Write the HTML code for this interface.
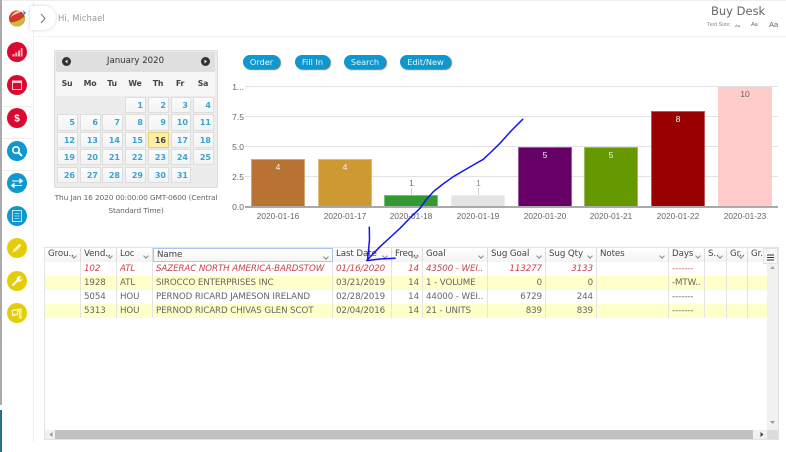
<!DOCTYPE html>
<html><head><meta charset="utf-8">
<style>
html,body{margin:0;padding:0;width:786px;height:452px;overflow:hidden;background:#fff}
#w{position:absolute;left:0;top:0;width:786px;height:452px;filter:blur(.35px);font-family:"DejaVu Sans","Liberation Sans",sans-serif;color:#555}
.a{position:absolute}
.ic{position:absolute;left:7px;width:20px;height:20px;border-radius:50%}
.ic svg{position:absolute;left:0;top:0}
.r{background:#d9092f}.b{background:#0d98cf}.y{background:#e4cd05}
.cal{left:54px;top:50px;width:164px;height:138px;background:#ececec;border:1px solid #ddd;border-radius:2px;box-sizing:border-box}
.d{position:absolute;width:20px;height:15px;background:linear-gradient(#fbfbfb,#f3f3f3);border:1px solid #dedede;box-sizing:border-box;color:#3ba3d4;font:bold 8px/15px "DejaVu Sans",sans-serif;text-align:right;padding-right:2px}
.wd{position:absolute;top:79px;font:bold 7.800px "DejaVu Sans",sans-serif;color:#444;width:22px;text-align:center;letter-spacing:-.2px}
.btn{position:absolute;top:55px;height:14px;background:#0d98cf;border-radius:8px;box-shadow:1px 1px 1px #777;color:#e8f6fb;font:8.200px/15px "DejaVu Sans",sans-serif;text-align:center}
.gl{position:absolute;left:245px;width:533px;height:1px;background:#e2e2e2}
.yl{position:absolute;width:14px;left:230px;text-align:right;font:8.500px "Liberation Sans",sans-serif;color:#666}
.bar{position:absolute;width:54px;box-sizing:border-box;border:1px solid rgba(255,255,255,.35);border-bottom:0;text-align:center;font:8.500px/14px "Liberation Sans",sans-serif;color:#f2f2f2}
.xl{position:absolute;top:211px;width:66px;text-align:center;font:8.300px "Liberation Sans",sans-serif;color:#666}
.hc,.c{position:absolute;box-sizing:border-box;white-space:nowrap;overflow:hidden;font-size:8.700px;letter-spacing:-.1px}
.hc{top:248px;height:14px;line-height:13px;padding-left:3px;border-right:1px solid #ddd;color:#444;background:linear-gradient(#fff,#f4f4f4)}
.hc i{position:absolute;right:4px;top:6px;width:3px;height:3px;border-right:1px solid #888;border-bottom:1px solid #888;transform:rotate(45deg)}
.row{position:absolute;left:45px;width:722px;height:14px}
.c{top:0;height:14px;line-height:14px;padding:0 3px;border-right:1px solid #e4e4e4;color:#666}
.rt{text-align:right}
.red .c{color:#c8414f;font-style:italic}
</style></head><body><div id="w">
<div class="a" style="left:0;top:0;width:786px;height:1px;background:#eee"></div>
<div class="a" style="left:0;top:0;width:1.500px;height:405px;background:#aaa"></div>
<div class="a" style="left:0;top:410px;width:1.500px;height:42px;background:#2a6f8e"></div>
<div class="a" style="left:33px;top:0;width:1px;height:442px;background:#eee"></div>
<div class="a" style="left:34px;top:36px;width:752px;height:1px;background:#f3f3f3"></div>
<div class="a" style="left:2px;top:106px;width:31px;height:1px;background:#eee"></div>
<div class="a" style="left:2px;top:138px;width:31px;height:1px;background:#eee"></div>
<div class="a" style="left:2px;top:170px;width:31px;height:1px;background:#eee"></div>

<svg class="a" style="left:8px;top:9px" width="19" height="18" viewBox="0 0 19 18">
<circle cx="9" cy="9.500" r="8" fill="#cf3a28"/><path d="M2 13C7 14 12 11 17 7C17.500 12 14 17.500 9 17.500C6 17.500 3 15.500 2 13Z" fill="#c6bb3c"/><path d="M3 8C6 5 10 5 14 2C10 1 5 3 3 8Z" fill="#f0c9b8"/><path d="M15 1L18 4L16 6Z" fill="#3a82b5"/></svg>

<div class="a" style="left:30px;top:6px;width:26px;height:24px;background:#fff;border-radius:0 12px 12px 0;box-shadow:0 0 3px #ccc"></div>
<svg class="a" style="left:39px;top:13px" width="8" height="11"><path d="M2 1L6 5.500L2 10" fill="none" stroke="#777" stroke-width="1"/></svg>
<div class="a" style="left:58px;top:14px;font-size:8.500px;color:#999">Hi, Michael</div>
<div class="a" style="left:711px;top:4px;font-size:11.500px;color:#666;white-space:nowrap">Buy Desk</div>
<div class="a" style="left:707px;top:22px;font:5.500px 'Liberation Sans',sans-serif;color:#888">Text Size:</div>
<div class="a" style="left:735px;top:23px;font:4px 'Liberation Sans',sans-serif;color:#666">Aa</div>
<div class="a" style="left:751px;top:22px;font:5.500px 'Liberation Sans',sans-serif;color:#666">Aa</div>
<div class="a" style="left:769px;top:20px;font:7.500px 'Liberation Sans',sans-serif;color:#666">Aa</div>

<div class="ic r" style="top:42px"><svg width="20" height="20"><path d="M5.500 12h2v2.500h-2zM8.300 10.500h2v4h-2zM11 8.500h2v6h-2zM13.700 6h1.800v8.500h-1.800z" fill="#f5b5c1"/></svg></div>
<div class="ic r" style="top:75px"><svg width="20" height="20"><rect x="5.500" y="6" width="9" height="8.500" fill="none" stroke="#f9cdd5" stroke-width="1"/><rect x="5.500" y="6" width="9" height="2" fill="#f9cdd5"/></svg></div>
<div class="ic r" style="top:108px"><svg width="20" height="20"><text x="10" y="13.500" text-anchor="middle" font-family="Liberation Sans" font-weight="bold" font-size="10" fill="#fff">$</text></svg></div>
<div class="ic b" style="top:141px"><svg width="20" height="20"><circle cx="9" cy="9" r="3.200" fill="none" stroke="#fff" stroke-width="1.600"/><path d="M11.500 11.500L15 15" stroke="#fff" stroke-width="2"/></svg></div>
<div class="ic b" style="top:173px"><svg width="20" height="20"><path d="M5 8h8M13 6v4L15.500 8zM15 12.500H7M7 10.500v4L4.500 12.500z" stroke="#fff" stroke-width="1" fill="#fff"/></svg></div>
<div class="ic b" style="top:206px"><svg width="20" height="20"><rect x="5.500" y="4.500" width="9" height="11" fill="none" stroke="#bfe4f2" stroke-width="1"/><path d="M7.500 7.500h5M7.500 10h5M7.500 12.500h5" stroke="#bfe4f2" stroke-width=".8"/></svg></div>
<div class="ic y" style="top:238px"><svg width="20" height="20"><path d="M5.500 14.500L6.500 11.500L12.500 5.500L14.500 7.500L8.500 13.500Z" fill="#fbf6c4"/></svg></div>
<div class="ic y" style="top:271px"><svg width="20" height="20"><path d="M5.500 14.500L10.500 9.500" stroke="#fff" stroke-width="2.200"/><path d="M9.500 8C10 5.500 12.500 4.500 14.500 5.500L12.500 7.500L13 8.500L14.500 8.500L15.500 6.500C16 9 13.500 11.500 11 10.500Z" fill="#fff"/></svg></div>
<div class="ic y" style="top:303px"><svg width="20" height="20"><path d="M5.500 7.500L14 6V15H12.500V8L10.500 8.300V11.500H7.500V12.500H5.500Z" fill="none" stroke="#fbf6c4" stroke-width="1.200"/></svg></div>

<div class="a cal"></div>
<div class="a" style="left:56px;top:52px;width:159px;height:20px;background:#dfdfdf;border-radius:2px"></div>
<div class="a" style="left:56px;top:72px;width:159px;height:24px;background:#f6f6f6"></div>
<div class="a" style="left:62px;top:57px;width:9px;height:9px;border-radius:50%;background:#333"></div>
<div class="a" style="left:201px;top:57px;width:9px;height:9px;border-radius:50%;background:#333"></div>
<svg class="a" style="left:62px;top:57px" width="9" height="9"><path d="M5.500 2.500L3 4.500L5.500 6.500Z" fill="#eee"/></svg>
<svg class="a" style="left:201px;top:57px" width="9" height="9"><path d="M3.500 2.500L6 4.500L3.500 6.500Z" fill="#eee"/></svg>
<div class="a" style="left:56px;top:55px;width:159px;text-align:center;font-size:8.600px;color:#333;line-height:13px">January 2020</div>
<div class="wd" style="left:56px">Su</div><div class="wd" style="left:79px">Mo</div><div class="wd" style="left:101px">Tu</div><div class="wd" style="left:124px">We</div><div class="wd" style="left:147px">Th</div><div class="wd" style="left:169px">Fr</div><div class="wd" style="left:192px">Sa</div>

<div class="d" style="left:125px;top:97px;width:21px;height:16px">1</div>
<div class="d" style="left:148px;top:97px;width:21px;height:16px">2</div>
<div class="d" style="left:171px;top:97px;width:20px;height:16px">3</div>
<div class="d" style="left:193px;top:97px;width:21px;height:16px">4</div>
<div class="d" style="left:57px;top:114px;width:21px;height:17px">5</div>
<div class="d" style="left:80px;top:114px;width:21px;height:17px">6</div>
<div class="d" style="left:102px;top:114px;width:21px;height:17px">7</div>
<div class="d" style="left:125px;top:114px;width:21px;height:17px">8</div>
<div class="d" style="left:148px;top:114px;width:21px;height:17px">9</div>
<div class="d" style="left:171px;top:114px;width:20px;height:17px">10</div>
<div class="d" style="left:193px;top:114px;width:21px;height:17px">11</div>
<div class="d" style="left:57px;top:132px;width:21px;height:16px">12</div>
<div class="d" style="left:80px;top:132px;width:21px;height:16px">13</div>
<div class="d" style="left:102px;top:132px;width:21px;height:16px">14</div>
<div class="d" style="left:125px;top:132px;width:21px;height:16px">15</div>
<div class="d" style="left:148px;top:132px;width:21px;height:16px;background:#fdf0a6;border-color:#e6cf70;color:#444">16</div>
<div class="d" style="left:171px;top:132px;width:20px;height:16px">17</div>
<div class="d" style="left:193px;top:132px;width:21px;height:16px">18</div>
<div class="d" style="left:57px;top:149px;width:21px;height:16px">19</div>
<div class="d" style="left:80px;top:149px;width:21px;height:16px">20</div>
<div class="d" style="left:102px;top:149px;width:21px;height:16px">21</div>
<div class="d" style="left:125px;top:149px;width:21px;height:16px">22</div>
<div class="d" style="left:148px;top:149px;width:21px;height:16px">23</div>
<div class="d" style="left:171px;top:149px;width:20px;height:16px">24</div>
<div class="d" style="left:193px;top:149px;width:21px;height:16px">25</div>
<div class="d" style="left:57px;top:167px;width:21px;height:16px">26</div>
<div class="d" style="left:80px;top:167px;width:21px;height:16px">27</div>
<div class="d" style="left:102px;top:167px;width:21px;height:16px">28</div>
<div class="d" style="left:125px;top:167px;width:21px;height:16px">29</div>
<div class="d" style="left:148px;top:167px;width:21px;height:16px">30</div>
<div class="d" style="left:171px;top:167px;width:20px;height:16px">31</div>
<div class="a" style="left:50px;top:192px;width:172px;text-align:center;font-size:7.450px;line-height:12.500px;color:#666;letter-spacing:-.15px">Thu Jan 16 2020 00:00:00 GMT-0600 (Central Standard Time)</div>

<div class="btn" style="left:243px;width:37px">Order</div>
<div class="btn" style="left:295px;width:35px">Fill In</div>
<div class="btn" style="left:344px;width:42px">Search</div>
<div class="btn" style="left:400px;width:51px">Edit/New</div>

<div class="gl" style="top:86px"></div><div class="gl" style="top:116px"></div><div class="gl" style="top:146px"></div><div class="gl" style="top:176px"></div>
<div class="yl" style="top:82px">1...</div><div class="yl" style="top:112px">7.5</div><div class="yl" style="top:142px">5.0</div><div class="yl" style="top:172px">2.5</div><div class="yl" style="top:202px">0.0</div>

<div class="bar" style="left:251px;top:159px;height:48px;background:#b87333">4</div>
<div class="bar" style="left:318px;top:159px;height:48px;background:#cd9933">4</div>
<div class="bar" style="left:384px;top:195px;height:12px;background:#339933"></div>
<div class="bar" style="left:451px;top:195px;height:12px;background:#e5e4e2"></div>
<div class="bar" style="left:518px;top:147px;height:60px;background:#660066">5</div>
<div class="bar" style="left:584px;top:147px;height:60px;background:#669900">5</div>
<div class="bar" style="left:651px;top:111px;height:96px;background:#990000">8</div>
<div class="bar" style="left:718px;top:87px;height:120px;background:#ffcccc;color:#666;border:0">10</div>
<div class="a" style="left:411px;top:188px;width:1px;height:7px;background:#ccc"></div>
<div class="a" style="left:478px;top:188px;width:1px;height:7px;background:#ccc"></div>
<div class="a" style="left:405px;top:178px;width:13px;text-align:center;font:8.500px 'Liberation Sans',sans-serif;color:#339933">1</div>
<div class="a" style="left:472px;top:178px;width:13px;text-align:center;font:8.500px 'Liberation Sans',sans-serif;color:#888">1</div>
<div class="a" style="left:245px;top:206px;width:533px;height:2px;background:#aaa"></div>
<div class="xl" style="left:245px">2020-01-16</div><div class="xl" style="left:312px">2020-01-17</div><div class="xl" style="left:378px">2020-01-18</div><div class="xl" style="left:445px">2020-01-19</div><div class="xl" style="left:512px">2020-01-20</div><div class="xl" style="left:578px">2020-01-21</div><div class="xl" style="left:645px">2020-01-22</div><div class="xl" style="left:712px">2020-01-23</div>

<div class="a" style="left:44px;top:247px;width:735px;height:193px;box-sizing:border-box;border:1px solid #e2e2e2;background:#fff"></div>
<div class="hc" style="left:45px;width:36px">Grou..<i></i></div>
<div class="hc" style="left:81px;width:36px">Vend..<i></i></div>
<div class="hc" style="left:117px;width:36px">Loc<i></i></div>
<div class="hc" style="left:153px;width:180px;border:1px solid #a9c6ee">Name<i></i></div>
<div class="hc" style="left:333px;width:59px">Last Date<i></i></div>
<div class="hc" style="left:392px;width:31px">Freq..<i></i></div>
<div class="hc" style="left:423px;width:65px">Goal<i></i></div>
<div class="hc" style="left:488px;width:58px">Sug Goal<i></i></div>
<div class="hc" style="left:546px;width:51px">Sug Qty<i></i></div>
<div class="hc" style="left:597px;width:72px">Notes<i></i></div>
<div class="hc" style="left:669px;width:36px">Days<i></i></div>
<div class="hc" style="left:705px;width:22px">S..<i></i></div>
<div class="hc" style="left:727px;width:21px">Gr..<i></i></div>
<div class="hc" style="left:748px;width:19px">Gr..</div>

<div class="row red" style="top:262px;background:#fff">
<div class="c" style="left:0;width:36px"></div><div class="c" style="left:36px;width:36px">102</div><div class="c" style="left:72px;width:36px">ATL</div><div class="c" style="left:108px;width:180px">SAZERAC NORTH AMERICA-BARDSTOW</div><div class="c" style="left:288px;width:59px">01/16/2020</div><div class="c rt" style="left:347px;width:31px">14</div><div class="c" style="left:378px;width:65px">43500 - WEI..</div><div class="c rt" style="left:443px;width:58px">113277</div><div class="c rt" style="left:501px;width:51px">3133</div><div class="c" style="left:552px;width:72px"></div><div class="c" style="left:624px;width:36px">-------</div><div class="c" style="left:660px;width:22px"></div><div class="c" style="left:682px;width:21px"></div>
</div>
<div class="row" style="top:276px;background:#ffffc9">
<div class="c" style="left:0;width:36px"></div><div class="c" style="left:36px;width:36px">1928</div><div class="c" style="left:72px;width:36px">ATL</div><div class="c" style="left:108px;width:180px">SIROCCO ENTERPRISES INC</div><div class="c" style="left:288px;width:59px">03/21/2019</div><div class="c rt" style="left:347px;width:31px">14</div><div class="c" style="left:378px;width:65px">1 - VOLUME</div><div class="c rt" style="left:443px;width:58px">0</div><div class="c rt" style="left:501px;width:51px">0</div><div class="c" style="left:552px;width:72px"></div><div class="c" style="left:624px;width:36px">-MTW..</div><div class="c" style="left:660px;width:22px"></div><div class="c" style="left:682px;width:21px"></div>
</div>
<div class="row" style="top:290px;background:#fff">
<div class="c" style="left:0;width:36px"></div><div class="c" style="left:36px;width:36px">5054</div><div class="c" style="left:72px;width:36px">HOU</div><div class="c" style="left:108px;width:180px">PERNOD RICARD JAMESON IRELAND</div><div class="c" style="left:288px;width:59px">02/28/2019</div><div class="c rt" style="left:347px;width:31px">14</div><div class="c" style="left:378px;width:65px">44000 - WEI..</div><div class="c rt" style="left:443px;width:58px">6729</div><div class="c rt" style="left:501px;width:51px">244</div><div class="c" style="left:552px;width:72px"></div><div class="c" style="left:624px;width:36px">-------</div><div class="c" style="left:660px;width:22px"></div><div class="c" style="left:682px;width:21px"></div>
</div>
<div class="row" style="top:304px;background:#ffffc9">
<div class="c" style="left:0;width:36px"></div><div class="c" style="left:36px;width:36px">5313</div><div class="c" style="left:72px;width:36px">HOU</div><div class="c" style="left:108px;width:180px">PERNOD RICARD CHIVAS GLEN SCOT</div><div class="c" style="left:288px;width:59px">02/04/2016</div><div class="c rt" style="left:347px;width:31px">14</div><div class="c" style="left:378px;width:65px">21 - UNITS</div><div class="c rt" style="left:443px;width:58px">839</div><div class="c rt" style="left:501px;width:51px">839</div><div class="c" style="left:552px;width:72px"></div><div class="c" style="left:624px;width:36px">-------</div><div class="c" style="left:660px;width:22px"></div><div class="c" style="left:682px;width:21px"></div>
</div>

<div class="a" style="left:767px;top:262px;width:11px;height:168px;background:#f1f1f1"></div>
<div class="a" style="left:763px;top:248px;width:15px;height:16px;background:#f7f7f7;border:1px solid #e2e2e2;box-sizing:border-box"></div>
<svg class="a" style="left:766px;top:254px" width="9" height="8"><path d="M1 1h7M1 3.500h7M1 6h7" stroke="#333" stroke-width="1"/></svg>
<svg class="a" style="left:769px;top:265px" width="7" height="5"><path d="M1 4L3.500 1L6 4Z" fill="#aaa"/></svg>
<svg class="a" style="left:769px;top:420px" width="7" height="5"><path d="M1 1L3.500 4L6 1Z" fill="#999"/></svg>
<div class="a" style="left:45px;top:430px;width:733px;height:9px;background:#f1f1f1"></div>
<div class="a" style="left:55px;top:430px;width:698px;height:9px;background:#c1c1c1"></div>
<div class="a" style="left:767px;top:430px;width:11px;height:9px;background:#dcdcdc"></div>
<svg class="a" style="left:48px;top:431px" width="6" height="7"><path d="M4.500 1L1.500 3.500L4.500 6Z" fill="#999"/></svg>
<svg class="a" style="left:759px;top:431px" width="6" height="7"><path d="M1.500 1L4.500 3.500L1.500 6Z" fill="#444"/></svg>

<svg class="a" style="left:0;top:0" width="786" height="452" fill="none">
<path d="M522.700 119.300L511 131L500 143.300L490 153L483.300 159.300L473.300 165L463 171L453.300 176.700L443 184L433.300 191.700L426 200L420 208.300L410 218L400 228.300L390 237.500L380 246.700L366.700 260.500M369.300 227.300L369.500 240L367.500 260.500L380 259L395 258.300" stroke="#1414f0" stroke-width="1.500" stroke-linejoin="round" stroke-linecap="round"/>
</svg>
</div></body></html>
